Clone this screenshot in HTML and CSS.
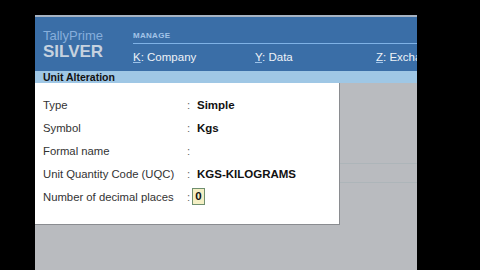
FILE: index.html
```html
<!DOCTYPE html>
<html>
<head>
<meta charset="utf-8">
<link rel="stylesheet" href="styles.css">
</head>
<body>
<div class="app">
  <div class="header">
    <div class="brand">
      <div class="tp">TallyPrime</div>
      <div class="silver">SILVER</div>
    </div>
    <div class="menu">
      <div class="manage">MANAGE</div>
      <div class="items">
        <span class="item item-k"><u>K</u>: Company</span>
        <span class="item item-y"><u>Y</u>: Data</span>
        <span class="item item-z"><u>Z</u>: Exchange</span>
      </div>
    </div>
  </div>
  <div class="titlebar">Unit Alteration</div>
  <div class="content">
    <div class="panel">
      <div class="row"><span class="label">Type</span><span class="colon">:</span><span class="value">Simple</span></div>
      <div class="row"><span class="label">Symbol</span><span class="colon">:</span><span class="value">Kgs</span></div>
      <div class="row"><span class="label">Formal name</span><span class="colon">:</span><span class="value"></span></div>
      <div class="row"><span class="label">Unit Quantity Code (UQC)</span><span class="colon">:</span><span class="value">KGS-KILOGRAMS</span></div>
      <div class="row"><span class="label">Number of decimal places</span><span class="colon">:</span><span class="value box">0</span></div>
    </div>
    <div class="side">
      <div class="side-line first"></div>
      <div class="side-line"></div>
    </div>
  </div>
</div>
</body>
</html>
```
FILE: styles.css
```css
html, body {
  margin: 0;
  padding: 0;
  background: #000;
  width: 480px;
  height: 270px;
  overflow: hidden;
  font-family: "Liberation Sans", Arial, sans-serif;
}
.app {
  margin-left: 35px;
  margin-top: 15px;
  width: 382px;
  height: 255px;
  background: #b9bbbf;
  border-top: 2px solid #a7b3c2;
  overflow: hidden;
}
.header {
  height: 54px;
  background: #3a6ea7;
  display: flex;
}
.brand {
  width: 90px;
  flex-shrink: 0;
  padding-left: 8px;
  padding-top: 11px;
}
.tp {
  color: #87afdc;
  font-size: 13px;
  line-height: 15px;
}
.silver {
  color: #c6d2df;
  font-size: 17px;
  font-weight: bold;
  line-height: 18px;
}
.menu {
  flex: 1;
  min-width: 0;
  padding-top: 12px;
  overflow: hidden;
}
.manage {
  color: #a3c4e8;
  font-size: 8px;
  font-weight: bold;
  letter-spacing: 0.3px;
  line-height: 14px;
  border-bottom: 1px solid #7fb2e6;
}
.items {
  display: flex;
  white-space: nowrap;
  padding-top: 6px;
}
.item {
  flex-shrink: 0;
  color: #eef2f7;
  font-size: 11.5px;
  line-height: 14px;
}
.item u {
  text-decoration-color: #9cc3ea;
}
.item-k { width: 122px; }
.item-y { width: 121px; }
.titlebar {
  height: 12px;
  background: #9fc7e5;
  font-size: 10.5px;
  font-weight: bold;
  color: #111;
  line-height: 12px;
  padding-left: 8px;
}
.content {
  display: flex;
}
.panel {
  width: 304px;
  height: 131px;
  background: #fff;
  border-right: 1px solid #8a8c90;
  border-bottom: 1px solid #8a8c90;
  padding-top: 10px;
}
.row {
  display: flex;
  align-items: center;
  height: 23px;
  font-size: 11.3px;
  color: #333;
}
.label {
  width: 144px;
  padding-left: 8px;
}
.colon {
  width: 10px;
  color: #666;
}
.value {
  font-weight: bold;
  color: #111;
  font-size: 11.5px;
}
.box {
  display: inline-block;
  width: 11px;
  height: 15px;
  line-height: 15px;
  text-align: center;
  background: #f4efc4;
  border: 1px solid #6f8f6f;
  margin-left: -5px;
}
.side {
  flex: 1;
  padding-top: 80px;
}
.side-line {
  height: 1px;
  background: #adb5b9;
}
.side-line.first {
  margin-bottom: 18px;
}
```
